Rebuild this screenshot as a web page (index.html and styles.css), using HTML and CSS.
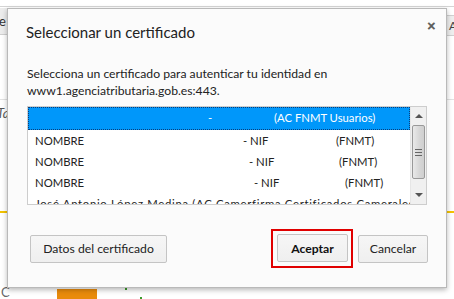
FILE: index.html
```html
<!DOCTYPE html>
<html lang="es">
<head>
<meta charset="utf-8">
<title>Seleccionar un certificado</title>
<link rel="stylesheet" href="styles.css">
</head>
<body>
<div class="backdrop">
  <div class="topline"></div>
  <div class="tab-left">e</div>
  <div class="tab-right">Ap</div>
  <div class="hline"></div>
  <div class="field-left">Ta</div>
  <div class="yellow"></div>
  <div class="bottom-c">C</div>
  <div class="bottom-orange"></div>
  <div class="dot d1"></div>
  <div class="dot d2"></div>
</div>

<div class="dialog" role="dialog">
  <div class="title-row">
    <h1 class="title">Seleccionar un certificado</h1>
    <span class="close">&#x2715;</span>
  </div>
  <p class="desc">Selecciona un certificado para autenticar tu identidad en<br>www1.agenciatributaria.gob.es:443.</p>
  <div class="listbox">
    <div class="rows">
      <div class="row selected"><span class="c1 s1"></span><span class="c2 s2">-</span><span class="c3 s3">(AC FNMT Usuarios)</span></div>
      <div class="row"><span class="c1 a1">NOMBRE</span><span class="c2 a2">- NIF</span><span class="c3">(FNMT)</span></div>
      <div class="row"><span class="c1 b1">NOMBRE</span><span class="c2 b2">- NIF</span><span class="c3">(FNMT)</span></div>
      <div class="row"><span class="c1 e1">NOMBRE</span><span class="c2 e2">- NIF</span><span class="c3">(FNMT)</span></div>
      <div class="row last"><span class="c1">José Antonio López Medina (AC Camerfirma Certificados Camerales)</span></div>
    </div>
    <div class="scrollbar">
      <div class="arrow up"></div>
      <div class="thumb"><span></span><span></span><span></span></div>
      <div class="track"></div>
      <div class="arrow down"></div>
    </div>
  </div>
  <div class="footer">
    <button class="btn btn-details">Datos del certificado</button>
    <div class="actions">
      <div class="highlight"><button class="btn btn-ok">Aceptar</button></div>
      <button class="btn btn-cancel">Cancelar</button>
    </div>
  </div>
</div>
</body>
</html>
```

FILE: styles.css
```css
* { box-sizing: border-box; }
html, body { margin: 0; padding: 0; }
body {
  width: 454px;
  height: 299px;
  overflow: hidden;
  background: #ffffff;
  font-family: Lato, "Open Sans", "DejaVu Sans", sans-serif;
  color: #222;
  position: relative;
}

/* background page pieces */
.backdrop { position: absolute; inset: 0; }
.topline { position: absolute; left: 0; right: 0; top: 6px; height: 1px; background: #d4d4d4; }
.tab-left {
  position: absolute; left: 0; top: 8px; width: 8px; height: 27px;
  background: #ececec; border-bottom: 1px solid #cfcfcf;
  font-size: 13px; line-height: 27px; color: #333; text-indent: -1px; overflow: hidden;
}
.tab-right {
  position: absolute; left: 446px; top: 15px; width: 10px; height: 21px;
  background: #eeeeee; border: 1px solid #d0d0d0;
  font-size: 12px; line-height: 19px; color: #444; overflow: hidden; padding-left: 2px;
}
.hline { position: absolute; left: 0; right: 0; top: 99px; height: 1px; background: #e2e2e2; }
.field-left {
  position: absolute; left: 0; top: 104px; width: 8px; height: 18px;
  font-size: 13px; line-height: 18px; font-style: italic; color: #555; overflow: hidden; text-indent: -3px;
}
.yellow { position: absolute; left: 0; right: 0; top: 211px; height: 2px; background: #f3c300; }
.bottom-c { position: absolute; left: 1px; top: 284px; font-size: 13px; color: #666; }
.bottom-orange { position: absolute; left: 57px; top: 289px; width: 40px; height: 10px; background: #e98b0c; }
.dot { position: absolute; width: 2px; height: 2px; background: #3a9a2a; }
.d1 { left: 125px; top: 288px; }
.d2 { left: 140px; top: 297px; }

/* dialog */
.dialog {
  position: absolute;
  left: 7px; top: 8px;
  width: 440px; height: 280px;
  background: #fbfbfb;
  border: 1px solid #b9b9b9;
  box-shadow: 0 2px 5px rgba(0,0,0,0.28);
  padding: 13px 20px 0 18px;
  display: flex;
  flex-direction: column;
}
.title-row { display: flex; justify-content: space-between; align-items: flex-start; height: 20px; }
.title { margin: 0; font-size: 15px; font-weight: normal; line-height: 20px; color: #222; }
.close { font-size: 11px; font-weight: bold; color: #5a5a5a; line-height: 14px; margin-top: -3px; margin-right: -10px; -webkit-text-stroke: 0.6px #5a5a5a; }
.desc { margin: 23px 0 0 1px; font-size: 12.2px; line-height: 17px; color: #222; }

.listbox {
  margin: 7px 0 0 1px;
  width: 400px; height: 99px;
  border: 1px solid #cdcdcd;
  background: #fff;
  display: flex;
  overflow: hidden;
}
.rows { flex: 1; overflow: hidden; }
.row {
  height: 21px; line-height: 21px; font-size: 11.3px; color: #222;
  white-space: nowrap; padding-left: 7px; display: flex;
}
.row.selected {
  height: 23px; line-height: 22px;
  background: #0097fa; color: #fff;
  outline: 1px dotted #0a3d7a; outline-offset: -1px;
}
.row.last { letter-spacing: 0.7px; }
.c1, .c2, .c3 { display: inline-block; }
.s1 { width: 173px; }
.s2 { width: 66px; }
.a1 { width: 208px; }
.a2 { width: 93px; }
.b1 { width: 214px; }
.b2 { width: 90px; }
.e1 { width: 219px; }
.e2 { width: 91px; }

.scrollbar { width: 16px; display: flex; flex-direction: column; background: #f0f0f0; border-left: 1px solid #e6e6e6; }
.arrow { height: 17px; position: relative; }
.arrow::after {
  content: ""; position: absolute; left: 4px; width: 0; height: 0;
  border-left: 4px solid transparent; border-right: 4px solid transparent;
}
.up::after { top: 7px; border-bottom: 4px solid #555; }
.down::after { top: 6px; border-top: 4px solid #555; }
.thumb {
  height: 54px; margin: 1px 1px 0 1px;
  border: 1px solid #999; border-radius: 2px;
  background: linear-gradient(to right, #e9e9e9, #d6d6d6 60%, #cfcfcf);
  display: flex; flex-direction: column; align-items: center; justify-content: center; gap: 2px;
}
.thumb span { display: block; width: 7px; height: 1px; background: #666; }
.track { flex: 1; }

.footer { display: flex; justify-content: space-between; align-items: center; margin-top: 24px; padding-left: 4px; margin-right: -2px; }
.actions { display: flex; align-items: center; gap: 5px; }
.btn {
  font-family: inherit; font-size: 12.2px; color: #222;
  height: 28px; padding: 0; white-space: nowrap;
  background: linear-gradient(#f6f6f6, #efefef);
  border: 1px solid #c4c4c4; border-radius: 2px;
}
.btn-details { width: 137px; }
.highlight { border: 2px solid #e00000; padding: 3px 3px 4px 4px; }
.btn-ok { width: 71px; font-weight: bold; color: #111; }
.btn-cancel { width: 70px; }
```
